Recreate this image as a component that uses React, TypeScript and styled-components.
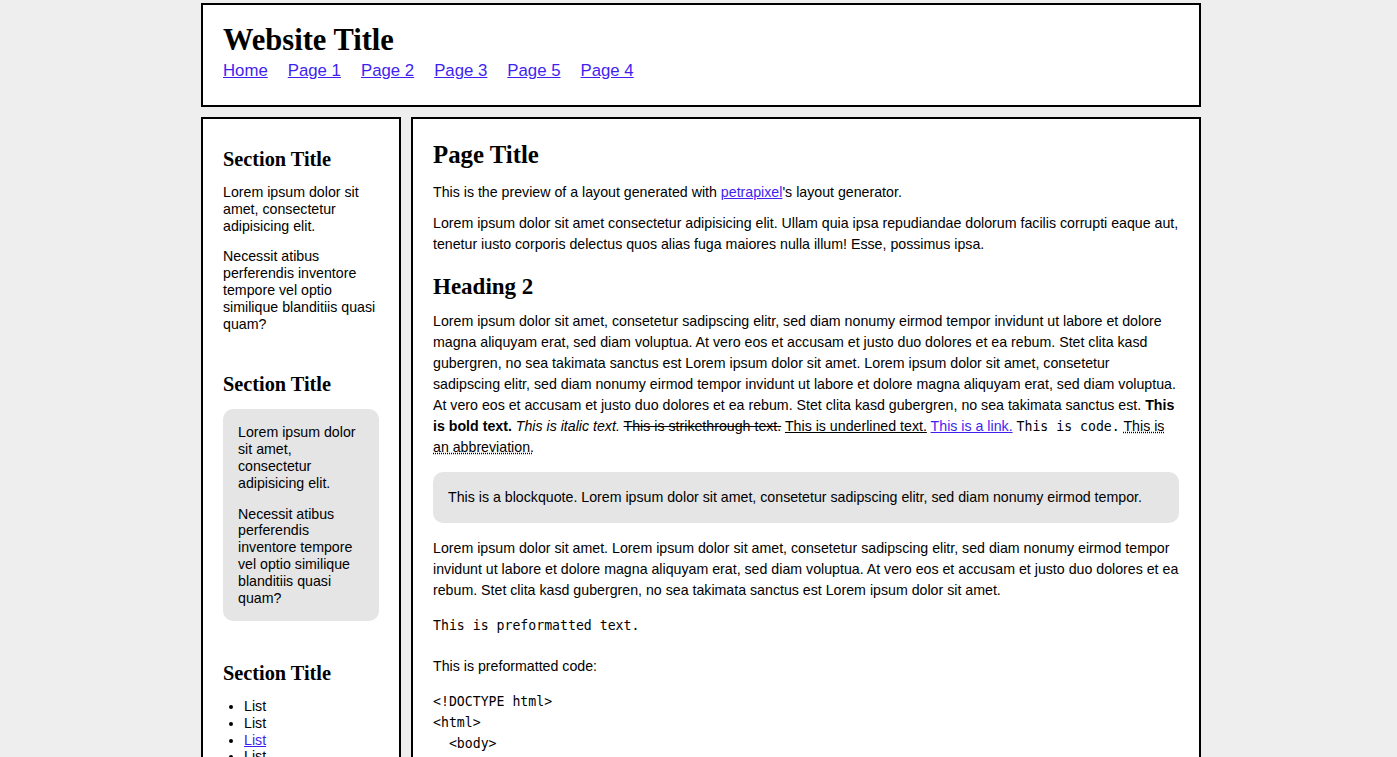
import styled, { createGlobalStyle } from "styled-components";

const GlobalStyle = createGlobalStyle`
  html, body {
    margin: 0;
    padding: 0;
    background: #eeeeee;
  }
  body {
    padding-left: 5px;
    font-family: "Liberation Sans", Arial, sans-serif;
    font-size: 14.2px;
    color: #000;
  }
`;

const Page = styled.div`
  width: 1000px;
  margin: 3px auto 0 auto;
  display: flex;
  flex-direction: column;
  gap: 10px;
`;

const Box = styled.div`
  background: #fff;
  border: 2px solid #000;
  padding: 20px;
  box-sizing: border-box;
`;

const Header = styled(Box)`
  height: 104px;
  padding: 19px 20px 0 20px;
`;

const SiteTitle = styled.h1`
  margin: 0;
  font-family: "Liberation Serif", Georgia, serif;
  font-weight: bold;
  font-size: 30.5px;
  line-height: 32px;
`;

const Nav = styled.nav`
  display: flex;
  gap: 20px;
  margin-top: 5px;
`;

const Link = styled.a`
  color: #3f1ff0;
  text-decoration: underline;
`;

const NavLink = styled(Link)`
  font-size: 16.8px;
  line-height: 20px;
`;

const Columns = styled.div`
  display: flex;
  gap: 10px;
  align-items: flex-start;
`;

const Sidebar = styled(Box)`
  width: 200px;
  flex-shrink: 0;
  padding-top: 28px;
  min-height: 700px;
`;

const Section = styled.section`
  margin-bottom: 40px;
`;

const SectionTitle = styled.h3`
  margin: 0 0 13px 0;
  font-family: "Liberation Serif", Georgia, serif;
  font-weight: bold;
  font-size: 20.3px;
  line-height: 24px;
`;

const SideText = styled.p`
  margin: 0 0 14px 0;
  line-height: 16.8px;
`;

const Card = styled.div`
  background: #e5e5e5;
  border-radius: 10px;
  padding: 15px 15px 1px 15px;
  margin-top: 12px;
`;

const List = styled.ul`
  margin: 0;
  padding-left: 21px;
  line-height: 16.6px;
`;

const Main = styled(Box)`
  flex: 1;
  padding-top: 22px;
  min-height: 700px;
`;

const PageTitle = styled.h1`
  margin: 0 0 13px 0;
  font-family: "Liberation Serif", Georgia, serif;
  font-weight: bold;
  font-size: 24.8px;
  line-height: 28px;
`;

const Heading2 = styled.h2`
  margin: 19px 0 11px 0;
  font-family: "Liberation Serif", Georgia, serif;
  font-weight: bold;
  font-size: 23px;
  line-height: 26px;
`;

const Text = styled.p`
  margin: 10px 0;
  line-height: 21px;
`;

const Underlined = styled.u`
  text-decoration: underline;
`;

const Abbr = styled.abbr`
  text-decoration: underline dotted;
`;

const Code = styled.code`
  font-family: "DejaVu Sans Mono", "Liberation Mono", monospace;
  font-size: 13.2px;
`;

const Quote = styled.blockquote`
  margin: 14px 0 15px 0;
  background: #e5e5e5;
  border-radius: 10px;
  padding: 15px;
  line-height: 21px;
`;

const Pre = styled.pre`
  margin: 14px 0 20px 0;
  font-family: "DejaVu Sans Mono", "Liberation Mono", monospace;
  font-size: 13.2px;
  line-height: 21px;
`;

const navItems = ["Home", "Page 1", "Page 2", "Page 3", "Page 5", "Page 4"];

export default function App() {
  return (
    <>
      <GlobalStyle />
      <Page>
        <Header>
          <SiteTitle>Website Title</SiteTitle>
          <Nav>
            {navItems.map((item) => (
              <NavLink key={item} href="#">
                {item}
              </NavLink>
            ))}
          </Nav>
        </Header>
        <Columns>
          <Sidebar>
            <Section>
              <SectionTitle>Section Title</SectionTitle>
              <SideText>Lorem ipsum dolor sit amet, consectetur adipisicing elit.</SideText>
              <SideText>
                Necessit atibus perferendis inventore tempore vel optio similique blanditiis
                quasi quam?
              </SideText>
            </Section>
            <Section>
              <SectionTitle>Section Title</SectionTitle>
              <Card>
                <SideText>Lorem ipsum dolor sit amet, consectetur adipisicing elit.</SideText>
                <SideText>
                  Necessit atibus perferendis inventore tempore vel optio similique blanditiis
                  quasi quam?
                </SideText>
              </Card>
            </Section>
            <Section>
              <SectionTitle>Section Title</SectionTitle>
              <List>
                <li>List</li>
                <li>List</li>
                <li>
                  <Link href="#">List</Link>
                </li>
                <li>List</li>
              </List>
            </Section>
          </Sidebar>
          <Main>
            <PageTitle>Page Title</PageTitle>
            <Text>
              This is the preview of a layout generated with <Link href="#">petrapixel</Link>'s
              layout generator.
            </Text>
            <Text>
              Lorem ipsum dolor sit amet consectetur adipisicing elit. Ullam quia ipsa
              repudiandae dolorum facilis corrupti eaque aut, tenetur iusto corporis delectus
              quos alias fuga maiores nulla illum! Esse, possimus ipsa.
            </Text>
            <Heading2>Heading 2</Heading2>
            <Text>
              Lorem ipsum dolor sit amet, consetetur sadipscing elitr, sed diam nonumy eirmod
              tempor invidunt ut labore et dolore magna aliquyam erat, sed diam voluptua. At vero
              eos et accusam et justo duo dolores et ea rebum. Stet clita kasd gubergren, no sea
              takimata sanctus est Lorem ipsum dolor sit amet. Lorem ipsum dolor sit amet,
              consetetur sadipscing elitr, sed diam nonumy eirmod tempor invidunt ut labore et
              dolore magna aliquyam erat, sed diam voluptua. At vero eos et accusam et justo duo
              dolores et ea rebum. Stet clita kasd gubergren, no sea takimata sanctus est.{" "}
              <b>This is bold text.</b> <i>This is italic text.</i>{" "}
              <s>This is strikethrough text.</s> <Underlined>This is underlined text.</Underlined>{" "}
              <Link href="#">This is a link.</Link> <Code>This is code.</Code>{" "}
              <Abbr title="abbreviation">This is an abbreviation.</Abbr>
            </Text>
            <Quote>
              This is a blockquote. Lorem ipsum dolor sit amet, consetetur sadipscing elitr, sed
              diam nonumy eirmod tempor.
            </Quote>
            <Text>
              Lorem ipsum dolor sit amet. Lorem ipsum dolor sit amet, consetetur sadipscing elitr,
              sed diam nonumy eirmod tempor invidunt ut labore et dolore magna aliquyam erat, sed
              diam voluptua. At vero eos et accusam et justo duo dolores et ea rebum. Stet clita
              kasd gubergren, no sea takimata sanctus est Lorem ipsum dolor sit amet.
            </Text>
            <Pre>This is preformatted text.</Pre>
            <Text>This is preformatted code:</Text>
            <Pre>{`<!DOCTYPE html>
<html>
  <body>
    <p>Hello</p>
  </body>
</html>`}</Pre>
          </Main>
        </Columns>
      </Page>
    </>
  );
}
